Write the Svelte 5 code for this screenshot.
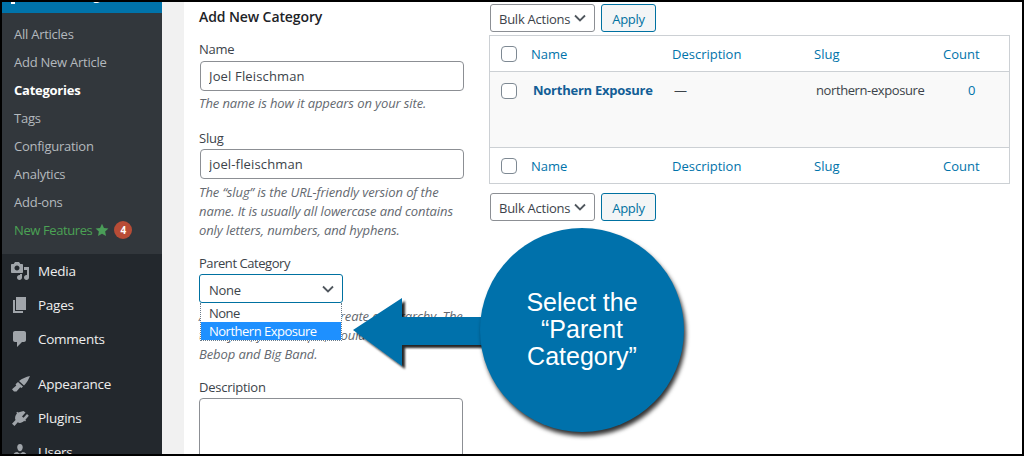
<script>
  const sub = ['All Articles', 'Add New Article', 'Categories', 'Tags', 'Configuration', 'Analytics', 'Add-ons'];
  const cols = ['Name', 'Description', 'Slug', 'Count'];
</script>

<div class="frame">
  <aside class="sidebar">
    <div class="current"><i></i><span>Knowledge</span></div>
    <ul class="submenu">
      {#each sub as s}
        <li class:active={s === 'Categories'}>{s}</li>
      {/each}
      <li class="new">New Features
        <svg class="star" viewBox="0 0 20 20" width="14" height="14"><path d="M10 1l2.800 6 6.400.8-4.700 4.400 1.200 6.400L10 15.400l-5.700 3.200 1.200-6.400L.8 7.800l6.400-.8z" fill="#4a9d58"/></svg>
        <span class="badge">4</span>
      </li>
    </ul>
    <ul class="menu">
      <li><svg viewBox="0 0 20 20" width="20" height="20"><path d="M13 11V4c0-.55-.45-1-1-1h-1.670L9 1H5L3.670 3H2c-.55 0-1 .45-1 1v7c0 .55.45 1 1 1h10c.55 0 1-.45 1-1zM7 4.500c1.380 0 2.500 1.120 2.500 2.500S8.380 9.500 7 9.500 4.500 8.380 4.500 7 5.620 4.500 7 4.500zM14 6h5v10.500c0 1.380-1.120 2.500-2.500 2.500S14 17.880 14 16.500s1.120-2.500 2.500-2.500c.17 0 .34.020.5.050V9h-3V6zm-4 8.050V13h2v3.500c0 1.380-1.120 2.500-2.500 2.500S7 17.880 7 16.500 8.120 14 9.500 14c.17 0 .34.020.5.050z"/></svg>Media</li>
      <li><svg viewBox="0 0 20 20" width="20" height="20"><path d="M6 15V2h10v13H6zm-1 1h8v2H3V5h2v11z"/></svg>Pages</li>
      <li><svg viewBox="0 0 20 20" width="20" height="20"><path d="M5 2h9c1.100 0 2 .9 2 2v7c0 1.100-.9 2-2 2h-2l-5 5v-5H5c-1.100 0-2-.9-2-2V4c0-1.100.9-2 2-2z"/></svg>Comments</li>
      <li class="gap"><svg viewBox="0 0 20 20" width="20" height="20"><path d="M20 2c-1.500 3.500-3 6.500-6 9.500L9 7c3-2.500 7-4 11-5zM8 8l5 4.500-1.500 1.500-1.300-.8-3.700 4.300H4l-2-2.200 4.300-3.900-.8-1.200z"/></svg>Appearance</li>
      <li><svg viewBox="0 0 20 20" width="20" height="20"><path d="M13.500 3L15.500 4.500 12 8.500l1.500 1.300L17 6l1.800 1.700-3.400 4 .6.800-1 1-.8-.7c-2 2-4.500 2.700-6.400 1.500L4.500 18 2 15.700l3.500-3.800C4.500 10 5.200 7.500 7 5.500l-.7-.8 1-1 .8.700z"/></svg>Plugins</li>
      <li><svg viewBox="0 0 20 20" width="20" height="20"><path d="M10 9.250c-2.270 0-2.730-3.440-2.730-3.440C7 4.020 7.820 2 9.970 2c2.160 0 2.980 2.020 2.710 3.810 0 0-.41 3.440-2.680 3.440zm0 2.570L12.720 10c2.390 0 4.520 2.330 4.520 4.530v2.490s-3.650 1.130-7.240 1.130c-3.650 0-7.240-1.130-7.240-1.130v-2.490c0-2.250 1.940-4.530 4.430-4.530z"/></svg>Users</li>
    </ul>
  </aside>
  <div class="gutter"></div>
  <main class="main">
    <section class="form">
      <h2>Add New Category</h2>
      <label for="n">Name</label>
      <input id="n" class="first" value="Joel Fleischman" />
      <p class="p1">The name is how it appears on your site.</p>
      <label for="s">Slug</label>
      <input id="s" value="joel-fleischman" />
      <p class="p2">The “slug” is the URL-friendly version of the name. It is usually all lowercase and contains only letters, numbers, and hyphens.</p>
      <span class="label tight">Parent Category</span>
      <div class="parent">
        <div class="select focus"><span>None</span><svg viewBox="0 0 12 8" width="12" height="8"><path d="M1 1.500l5 5 5-5" fill="none" stroke="#50575e" stroke-width="1.800"/></svg></div>
        <div class="options">
          <div>None</div>
          <div class="hl">Northern Exposure</div>
        </div>
      </div>
      <p class="assign">Assign a parent term to create a hierarchy. The term Jazz, for example, would be the parent of Bebop and Big Band.</p>
      <label for="d">Description</label>
      <textarea id="d"></textarea>
    </section>
    <section class="list">
      <div class="bulk">
        <div class="select small"><span>Bulk Actions</span><svg viewBox="0 0 12 8" width="12" height="8"><path d="M1 1.500l5 5 5-5" fill="none" stroke="#50575e" stroke-width="1.800"/></svg></div>
        <button>Apply</button>
      </div>
      <div class="table">
        <div class="row head">
          <i class="cb"></i>
          {#each cols as c}<span class="th">{c}</span>{/each}
        </div>
        <div class="row body">
          <i class="cb"></i>
          <b class="th">Northern Exposure</b>
          <span class="th dark">—</span>
          <span class="th dark">northern-exposure</span>
          <span class="th zero">0</span>
        </div>
        <div class="row foot">
          <i class="cb"></i>
          {#each cols as c}<span class="th">{c}</span>{/each}
        </div>
      </div>
      <div class="bulk second">
        <div class="select small"><span>Bulk Actions</span><svg viewBox="0 0 12 8" width="12" height="8"><path d="M1 1.500l5 5 5-5" fill="none" stroke="#50575e" stroke-width="1.800"/></svg></div>
        <button>Apply</button>
      </div>
    </section>
  </main>

  <svg class="arrow" viewBox="0 0 140 76" width="140" height="76">
    <defs><filter id="sh" x="-10%" y="-20%" width="125%" height="150%"><feDropShadow dx="3" dy="3" stdDeviation="1.200" flood-color="#000" flood-opacity=".85"/></filter></defs>
    <path d="M1 36L50 4V23H140V51H50V72z" fill="#0071ab" filter="url(#sh)"/>
  </svg>
  <div class="bubble"><span>Select the<br />“Parent<br />Category”</span></div>
</div>

<style>
  :global(body) { margin: 0; }
  * { box-sizing: border-box; }
  .frame {
    position: relative; width: 1024px; height: 456px; overflow: hidden;
    border: 2px solid #000;
    display: flex; background: #fff;
    font: 13px/19px "Open Sans", "Noto Sans", sans-serif; color: #3c434a;
    letter-spacing: -.25px;
  }
  .sidebar { width: 160px; flex: none; background: #23282d; color: #eee; height: 452px; overflow: hidden; }
  .current { position: relative; height: 11px; background: #0073aa; overflow: hidden; color: #fff; display: flex; align-items: flex-end; padding-left: 36px; font-size: 14px; }
  .current i { position: absolute; left: 9px; top: 0; width: 4px; height: 2px; background: #fff; }
  .current span { line-height: 18px; height: 18px; flex: none; margin-bottom: 10px; }
  ul { list-style: none; margin: 0; padding: 0; }
  .submenu { background: #32373c; height: 241px; padding-top: 7px; color: #b4b9be; }
  .submenu li { height: 28px; line-height: 28px; padding-left: 12px; display: flex; align-items: center; }
  .submenu .active { color: #fff; font-weight: 700; }
  .submenu .new { color: #4ba254; letter-spacing: -.4px; }
  .star { margin-left: 3px; }
  .badge { width: 18px; height: 18px; border-radius: 50%; background: #b84c36; color: #fff; font-size: 10px; font-weight: 700; line-height: 18px; text-align: center; margin-left: 5px; letter-spacing: 0; }
  .menu li { height: 34px; display: flex; align-items: center; padding-left: 36px; position: relative; font-size: 13.500px; color: #eee; }
  .menu li.gap { margin-top: 11px; }
  .menu svg { position: absolute; left: 8px; top: 7px; fill: #a0a5aa; }
  .gutter { width: 22px; flex: none; background: #f1f1f1; }
  .main { flex: 1; display: flex; align-items: flex-start; min-width: 0; }
  .form { width: 305px; flex: none; padding: 5px 0 0 15px; }
  h2 { margin: 0 0 14px; font-size: 14px; font-weight: 600; color: #1d2327; line-height: 19px; letter-spacing: -.1px; }
  label, .label { display: block; color: #3c434a; height: 19px; }
  .tight { letter-spacing: -.45px; }
  input, textarea {
    display: block; font: inherit; color: #3c434a; width: 264px; margin: 1px 0 0 1px;
    border: 1px solid #8c8f94; border-radius: 4px; background: #fff; outline: none; letter-spacing: .15px;
  }
  input { height: 30px; padding: 0 8px; }
  input.first { margin-top: 2px; }
  textarea { height: 100px; margin: 1px 0 0; resize: none; }
  p { width: 264px; font-style: italic; color: #646970; letter-spacing: -.1px; }
  .p1 { margin: 3px 0 16px; }
  .p2 { margin: 4px 0 14px; }
  .select { display: flex; align-items: center; justify-content: space-between; background: #fff; border: 1px solid #8c8f94; border-radius: 3px; }
  .select span { padding-top: 2px; }
  .parent { position: relative; height: 29px; margin-top: 1px; width: 144px; }
  .focus { height: 29px; border: 1.500px solid #0071a1; padding: 0 8px 0 9px; }
  .focus span { padding-top: 3px; }
  .options { position: absolute; left: 1px; top: 29px; width: 142px; height: 38px; background: #fff; border: 1px dotted #6a7b8a; border-top: none; color: #3c434a; z-index: 2; letter-spacing: -.5px; }
  .options div { padding-left: 8px; height: 19px; line-height: 20px; }
  .options .hl { background: #1e90ff; color: #fff; height: 18px; line-height: 19px; }
  .assign { margin: 4px 0 14px; }
  .list { width: 521px; padding-top: 2px; }
  .bulk { display: flex; gap: 6px; padding-left: 1px; }
  .second { margin-top: 9px; }
  .small { width: 105px; height: 28px; padding: 0 8px; color: #3c434a; }
  button { width: 55px; height: 28px; font: inherit; letter-spacing: inherit; color: #0071a1; background: #f3f5f6; border: 1px solid #0071a1; border-radius: 3px; padding: 2px 0 0; }
  .table { border: 1px solid #ccd0d4; margin-top: 3px; background: #fff; height: 149px; display: flex; flex-direction: column; }
  .row { display: grid; grid-template-columns: 30px 141px 142px 129px 1fr; align-items: center; padding-left: 11px; color: #0073aa; letter-spacing: 0; }
  .head .th, .foot .th { padding-top: 2px; }
  .head { height: 36px; border-bottom: 1px solid #ccd0d4; }
  .body { height: 75px; background: #f9f9f9; align-items: start; padding-top: 9px; letter-spacing: -.25px; }
  .foot { height: 36px; border-top: 1px solid #ccd0d4; }
  .cb { width: 16px; height: 16px; border: 1px solid #7e8993; border-radius: 4px; background: #fff; display: block; }
  .body .cb { margin-top: 2px; }
  .body .th { padding-left: 2px; }
  .body b { font-weight: 700; color: #135e96; white-space: nowrap; }
  .body .dark { color: #3c434a; letter-spacing: -.4px; }
  .body .zero { padding-left: 25px; }
  .arrow { position: absolute; left: 350px; top: 292px; z-index: 3; overflow: visible; }
  .bubble {
    position: absolute; left: 478px; top: 226px; width: 204px; height: 204px; border-radius: 50%;
    background: #0071ab; box-shadow: 2px 4px 4px rgba(0,0,0,.8); z-index: 4; color: #fff;
    font: 25px/27px "Liberation Sans", Arial, sans-serif; letter-spacing: 0; text-align: center;
    display: flex; align-items: center; justify-content: center;
  }
  .bubble span { margin-top: -2px; }
</style>
